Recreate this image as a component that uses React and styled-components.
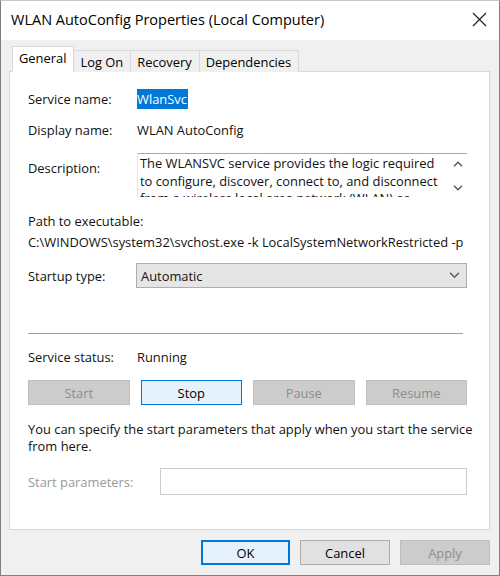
import React from "react";
import styled, { createGlobalStyle } from "styled-components";

const GlobalStyle = createGlobalStyle`
  html, body {
    margin: 0;
    padding: 0;
    background: #ffffff;
  }
  * {
    box-sizing: border-box;
  }
`;

const Window = styled.div`
  width: 500px;
  height: 576px;
  display: flex;
  flex-direction: column;
  border: 1px solid #808080;
  border-top-color: #c8c8c8;
  font-family: "Open Sans", "Noto Sans", sans-serif;
  font-size: 12.9px;
  color: #111;
  background: #f0f0f0;
  overflow: hidden;
`;

const TitleBar = styled.div`
  height: 39px;
  flex-shrink: 0;
  background: #ffffff;
  display: flex;
  align-items: center;
  justify-content: space-between;
  padding: 0 11px 2px 10px;
  .title {
    font-size: 14.5px;
    color: #000;
  }
`;

const CloseButton = styled.div`
  width: 16px;
  height: 16px;
  margin-right: 1px;
  display: flex;
  align-items: center;
  justify-content: center;
`;

const Body = styled.div`
  flex: 1;
  display: flex;
  flex-direction: column;
  padding: 6px 9px 0 8px;
`;

const TabStrip = styled.div`
  display: flex;
  align-items: flex-end;
  height: 26px;
  padding-left: 3px;
  position: relative;
  z-index: 1;
  margin-bottom: -1px;
`;

const Tab = styled.div`
  height: ${(p) => (p.$active ? "26px" : "22px")};
  padding: ${(p) => (p.$active ? "0 7px 3px 6px" : "0 7px 0 6px")};
  display: flex;
  align-items: center;
  background: ${(p) => (p.$active ? "#ffffff" : "#f0f0f0")};
  border: 1px solid #d9d9d9;
  border-bottom: ${(p) => (p.$active ? "1px solid #ffffff" : "none")};
  margin-left: ${(p) => (p.$active ? "0" : "-1px")};
  color: #000;
`;

const Panel = styled.div`
  height: 459px;
  flex-shrink: 0;
  background: #ffffff;
  border: 1px solid #d9d9d9;
  padding: 0 22px 0 18px;
  display: flex;
  flex-direction: column;
`;

const Row = styled.div`
  display: flex;
  align-items: ${(p) => (p.$top ? "flex-start" : "center")};
  min-height: 18px;
  margin-top: ${(p) => p.$gap || 0}px;
`;

const Label = styled.div`
  width: ${(p) => p.$width || 109}px;
  flex-shrink: 0;
  padding-top: ${(p) => p.$pad || 0}px;
  color: ${(p) => (p.$disabled ? "#9a9a9a" : "#111")};
`;

const Value = styled.div`
  color: #111;
`;

const Selected = styled.span`
  background: #0078d7;
  color: #ffffff;
  padding: 1px 1px 1px 0;
`;

const DescriptionBox = styled.div`
  flex: 1;
  height: 44px;
  display: flex;
  border-top: 1px solid #a8a8a8;
  border-left: 1px solid #e6e6e6;
  overflow: hidden;
  .text {
    flex: 1;
    padding: 1px 0 0 2px;
    line-height: 17.5px;
  }
`;

const ScrollArrows = styled.div`
  width: 19px;
  flex-shrink: 0;
  display: flex;
  flex-direction: column;
  align-items: center;
  justify-content: space-between;
  padding: 7px 0 6px;
`;

const PlainLine = styled.div`
  margin-top: ${(p) => p.$gap || 0}px;
  line-height: ${(p) => p.$lh || 18}px;
  white-space: ${(p) => (p.$nowrap ? "nowrap" : "normal")};
`;

const Select = styled.div`
  flex: 1;
  height: 25px;
  background: #e5e5e5;
  border: 1px solid #adadad;
  display: flex;
  align-items: center;
  justify-content: space-between;
  padding: 0 6px 0 4px;
  margin-left: -1px;
`;

const Separator = styled.div`
  height: 1px;
  background: #a0a0a0;
  margin: 45px 4px 0 0;
`;

const ButtonRow = styled.div`
  display: grid;
  grid-template-columns: repeat(4, 1fr);
  gap: 11px;
  margin-top: 14px;
`;

const Button = styled.div`
  height: 25px;
  flex-shrink: 0;
  display: flex;
  align-items: center;
  justify-content: center;
  background: ${(p) =>
    p.$disabled ? "#cccccc" : p.$focused ? "#e5f1fb" : "#e1e1e1"};
  border: 1px solid
    ${(p) => (p.$disabled ? "#bfbfbf" : p.$focused ? "#0078d7" : "#adadad")};
  box-shadow: ${(p) => (p.$strong ? "inset 0 0 0 1px #0078d7" : "none")};
  color: ${(p) => (p.$disabled ? "#8d8d8d" : "#000")};
`;

const Input = styled.div`
  flex: 1;
  height: 27px;
  border: 1px solid #cccccc;
  background: #ffffff;
`;

const Footer = styled.div`
  display: flex;
  justify-content: flex-end;
  gap: 10px;
  margin-top: 10px;
`;

const FooterButton = styled(Button)`
  width: ${(p) => p.$w || 90}px;
`;

const Chevron = ({ up, size = 10, color = "#555" }) => (
  <svg width={size} height={size * 0.6} viewBox="0 0 10 6">
    <path
      d={up ? "M1 5.2 L5 1.2 L9 5.2" : "M1 0.8 L5 4.8 L9 0.8"}
      fill="none"
      stroke={color}
      strokeWidth="1.4"
    />
  </svg>
);

export default function App() {
  return (
    <>
      <GlobalStyle />
      <Window>
        <TitleBar>
          <span className="title">WLAN AutoConfig Properties (Local Computer)</span>
          <CloseButton>
            <svg width="15" height="15" viewBox="0 0 15 15">
              <path d="M1 1 L14 14 M14 1 L1 14" stroke="#222" strokeWidth="1.2" />
            </svg>
          </CloseButton>
        </TitleBar>
        <Body>
          <TabStrip>
            <Tab $active>General</Tab>
            <Tab>Log On</Tab>
            <Tab>Recovery</Tab>
            <Tab>Dependencies</Tab>
          </TabStrip>
          <Panel>
            <Row $gap={18}>
              <Label>Service name:</Label>
              <Value>
                <Selected>WlanSvc</Selected>
              </Value>
            </Row>
            <Row $gap={13}>
              <Label>Display name:</Label>
              <Value>WLAN AutoConfig</Value>
            </Row>
            <Row $gap={14} $top>
              <Label $pad={6}>Description:</Label>
              <DescriptionBox>
                <div className="text">
                  The WLANSVC service provides the logic required to configure,
                  discover, connect to, and disconnect from a wireless local area
                  network (WLAN) as defined by IEEE 802.11 standards.
                </div>
                <ScrollArrows>
                  <Chevron up />
                  <Chevron />
                </ScrollArrows>
              </DescriptionBox>
            </Row>
            <PlainLine $gap={15}>Path to executable:</PlainLine>
            <PlainLine $gap={3} $nowrap>
              C:\WINDOWS\system32\svchost.exe -k LocalSystemNetworkRestricted -p
            </PlainLine>
            <Row $gap={12}>
              <Label>Startup type:</Label>
              <Select>
                <span>Automatic</span>
                <Chevron size={11} color="#666" />
              </Select>
            </Row>
            <Separator />
            <Row $gap={14}>
              <Label>Service status:</Label>
              <Value>Running</Value>
            </Row>
            <ButtonRow>
              <Button $disabled>Start</Button>
              <Button $focused>Stop</Button>
              <Button $disabled>Pause</Button>
              <Button $disabled>Resume</Button>
            </ButtonRow>
            <PlainLine $gap={16} $lh={17} $nowrap>
              You can specify the start parameters that apply when you start the
              service
              <br />
              from here.
            </PlainLine>
            <Row $gap={13}>
              <Label $width={132} $disabled>
                Start parameters:
              </Label>
              <Input />
            </Row>
          </Panel>
          <Footer>
            <FooterButton $w={89} $focused $strong>
              OK
            </FooterButton>
            <FooterButton $w={90}>Cancel</FooterButton>
            <FooterButton $w={90} $disabled>
              Apply
            </FooterButton>
          </Footer>
        </Body>
      </Window>
    </>
  );
}
